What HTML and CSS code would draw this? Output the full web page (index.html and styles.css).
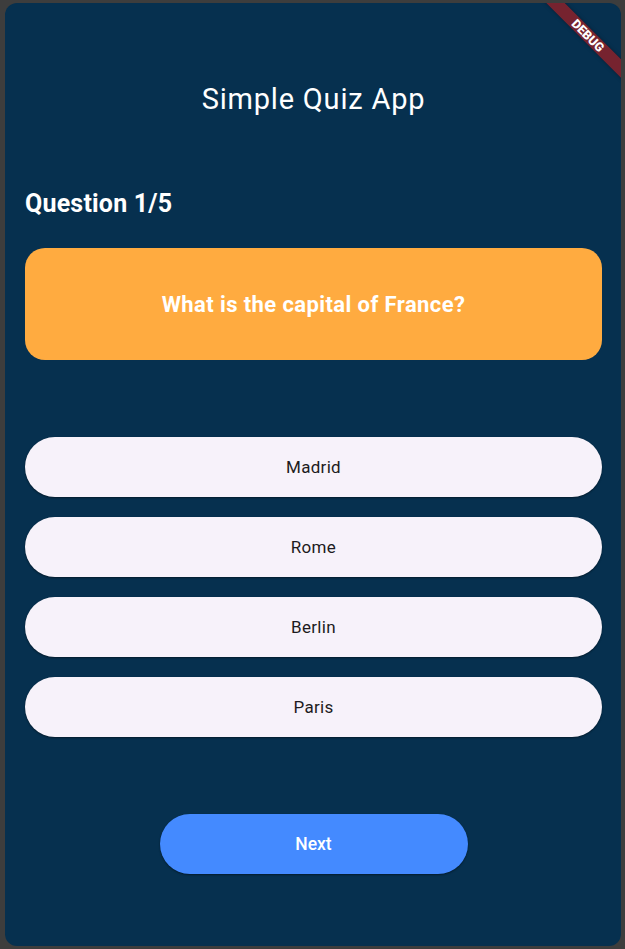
FILE: index.html
```html
<!DOCTYPE html>
<html>
<head>
<meta charset="utf-8">
<link rel="stylesheet" href="styles.css">
</head>
<body>
<div class="app">
  <h1 class="title">Simple Quiz App</h1>
  <h2 class="qnum">Question 1/5</h2>
  <div class="card">What is the capital of France?</div>
  <div class="options">
    <button class="option">Madrid</button>
    <button class="option">Rome</button>
    <button class="option">Berlin</button>
    <button class="option">Paris</button>
  </div>
  <div class="footer">
    <button class="next">Next</button>
  </div>
  <div class="banner-clip"><div class="banner">DEBUG</div></div>
</div>
</body>
</html>
```
FILE: styles.css
```css
html, body {
  margin: 0;
  padding: 0;
  background: #3d3d3d;
  height: 100%;
}
body {
  padding: 3px 4px 3px 5px;
  box-sizing: border-box;
  font-family: Roboto, "Noto Sans", sans-serif;
}
.app {
  position: relative;
  height: 943px;
  background: #06304f;
  border-radius: 12px;
  overflow: hidden;
  padding: 0 19px 0 20px;
  box-sizing: border-box;
  display: flex;
  flex-direction: column;
}
.title {
  margin: 77px 0 0;
  height: 38px;
  line-height: 38px;
  text-align: center;
  color: #ffffff;
  font-size: 29px;
  letter-spacing: 0.8px;
  font-weight: 400;
}
.qnum {
  margin: 71px 0 0;
  height: 30px;
  line-height: 30px;
  color: #ffffff;
  font-size: 25px;
  letter-spacing: 0.2px;
  font-weight: 700;
}
.card {
  margin-top: 29px;
  height: 112px;
  background: #ffab40;
  border-radius: 20px;
  display: flex;
  align-items: center;
  justify-content: center;
  color: #ffffff;
  font-size: 22px;
  letter-spacing: 0.4px;
  font-weight: 700;
}
.options {
  margin-top: 77px;
  display: flex;
  flex-direction: column;
  gap: 20px;
}
.option {
  height: 60px;
  border: none;
  border-radius: 30px;
  background: #f7f2fa;
  color: #1d1b20;
  font-family: Roboto, "Noto Sans", sans-serif;
  font-size: 17px;
  letter-spacing: 0.3px;
  font-weight: 400;
  box-shadow: 0 1px 2px rgba(0,0,0,0.45);
}
.footer {
  margin-top: 77px;
  display: flex;
  justify-content: center;
}
.next {
  width: 308px;
  height: 60px;
  border: none;
  border-radius: 30px;
  background: #448aff;
  color: #ffffff;
  font-family: Roboto, "Noto Sans", sans-serif;
  font-size: 17.5px;
  font-weight: 500;
  box-shadow: 0 1px 2px rgba(0,0,0,0.45);
}
.banner-clip {
  position: absolute;
  top: 0;
  right: 0;
  width: 100px;
  height: 100px;
  overflow: hidden;
}
.banner {
  position: absolute;
  left: 7px;
  top: 26px;
  width: 120px;
  height: 13px;
  line-height: 13px;
  transform: rotate(45deg);
  background: rgba(183, 28, 28, 0.63);
  box-shadow: 0 0 4px rgba(0,0,0,0.35);
  color: #ffffff;
  text-align: center;
  font-family: Roboto, "Noto Sans", sans-serif;
  font-size: 12.5px;
  font-weight: 900;
}
```
